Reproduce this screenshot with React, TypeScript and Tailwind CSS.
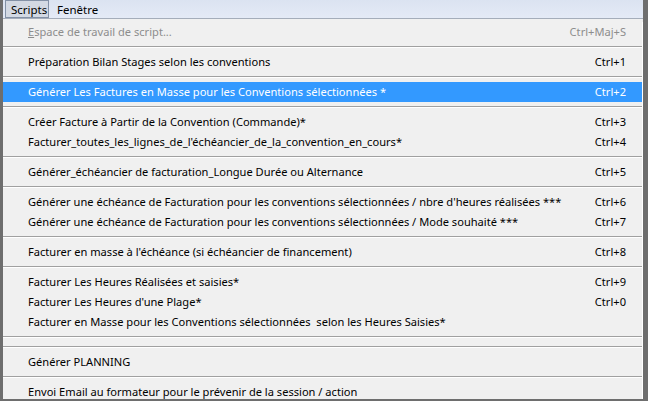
import React from "react";

type Item =
  | { kind: "item"; label: React.ReactNode; shortcut?: string; disabled?: boolean; active?: boolean }
  | { kind: "sep" };

const items: Item[] = [
  {
    kind: "item",
    label: (
      <>
        <span className="underline">E</span>space de travail de script...
      </>
    ),
    shortcut: "Ctrl+Maj+S",
    disabled: true,
  },
  { kind: "sep" },
  { kind: "item", label: "Préparation Bilan Stages selon les conventions", shortcut: "Ctrl+1" },
  { kind: "sep" },
  { kind: "item", label: "Générer Les Factures en Masse pour les Conventions sélectionnées *", shortcut: "Ctrl+2", active: true },
  { kind: "sep" },
  { kind: "item", label: "Créer Facture à Partir de la Convention (Commande)*", shortcut: "Ctrl+3" },
  { kind: "item", label: "Facturer_toutes_les_lignes_de_l'échéancier_de_la_convention_en_cours*", shortcut: "Ctrl+4" },
  { kind: "sep" },
  { kind: "item", label: "Générer_échéancier de facturation_Longue Durée ou Alternance", shortcut: "Ctrl+5" },
  { kind: "sep" },
  { kind: "item", label: "Générer une échéance de Facturation pour les conventions sélectionnées / nbre d'heures réalisées ***", shortcut: "Ctrl+6" },
  { kind: "item", label: "Générer une échéance de Facturation pour les conventions sélectionnées / Mode souhaité ***", shortcut: "Ctrl+7" },
  { kind: "sep" },
  { kind: "item", label: "Facturer en masse à l'échéance (si échéancier de financement)", shortcut: "Ctrl+8" },
  { kind: "sep" },
  { kind: "item", label: "Facturer Les Heures Réalisées et saisies*", shortcut: "Ctrl+9" },
  { kind: "item", label: "Facturer Les Heures d'une Plage*", shortcut: "Ctrl+0" },
  { kind: "item", label: "Facturer en Masse pour les Conventions sélectionnées  selon les Heures Saisies*" },
  { kind: "sep" },
  { kind: "sep" },
  { kind: "item", label: "Générer PLANNING" },
  { kind: "sep" },
  { kind: "item", label: "Envoi Email au formateur pour le prévenir de la session / action" },
];

export default function App() {
  return (
    <div
      className="w-[648px] h-[401px] overflow-hidden bg-[#6e6e6e] pl-[3px] pr-[5px] pb-[2px] flex flex-col text-[11.1px] leading-none"
      style={{ fontFamily: '"Noto Sans", "Open Sans", sans-serif' }}
    >
      <div className="flex-1 min-h-0 flex flex-col bg-[#f0f0f0] overflow-hidden">
        {/* menu bar */}
        <div className="h-[19px] shrink-0 flex items-stretch bg-gradient-to-b from-[#dbe3f1] to-[#e4eaf6] border-b border-[#a5adba]">
          <div className="ml-[2px] w-[44px] pl-[5px] pt-[1px] flex items-center bg-[#d3d9e3] border border-[#8391a6] text-[11.5px] text-black whitespace-pre">
            Scripts
          </div>
          <div className="pl-[8px] pt-[1px] flex items-center text-[11.5px] text-black">Fenêtre</div>
        </div>
        <div className="h-[3px] shrink-0" />
        <div className="flex flex-col border-r border-white">
          {items.map((it, i) =>
            it.kind === "sep" ? (
              <div key={i} className="h-[10px] shrink-0 flex flex-col justify-center">
                <div className="h-[1px] bg-[#a0a0a0]" />
                <div className="h-[1px] bg-white" />
              </div>
            ) : (
              <div
                key={i}
                className={
                  "h-[20px] shrink-0 flex items-center pl-[25px] pr-[16px] whitespace-pre " +
                  (it.active ? "bg-[#3399ff] text-white" : it.disabled ? "text-[#8d8d8d]" : "text-black")
                }
              >
                <span className="flex-1">{it.label}</span>
                {it.shortcut && <span>{it.shortcut}</span>}
              </div>
            )
          )}
        </div>
      </div>
    </div>
  );
}
